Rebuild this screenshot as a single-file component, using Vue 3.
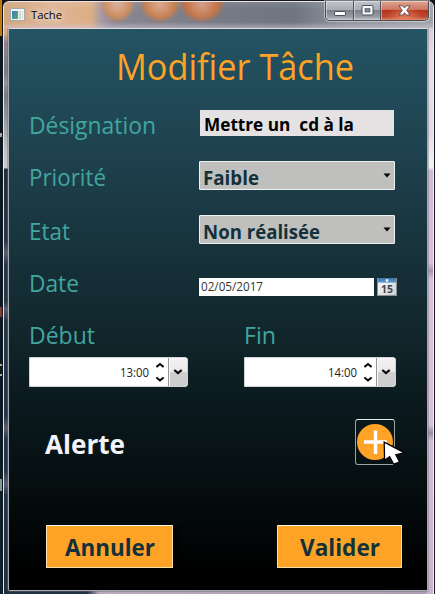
<script setup>
import { h } from 'vue'

// Single line of text fitted to a given advance width, with its baseline at `base`.
const FitText = ({ text, w, height, base }) =>
  h('svg', { width: w, height, class: 'fit' }, [
    h('text', { x: 0, y: base, textLength: w, lengthAdjust: 'spacingAndGlyphs' }, text),
  ])
FitText.props = ['text', 'w', 'height', 'base']

const times = [
  { label: 'Début', lw: 66, value: '13:00', width: 159 },
  { label: 'Fin', lw: 32, value: '14:00', width: 152 },
]
</script>

<template>
  <div class="desktop">
    <div class="behind"><i class="m1"></i><i class="m2"></i><i class="m3"></i><i class="m4"></i><i class="m5"></i></div>
    <div class="window">
      <header class="titlebar">
        <div class="glass"><b></b><b></b><b></b></div>
        <svg class="appicon" width="15" height="13" viewBox="0 0 15 13">
          <defs><linearGradient id="ai" x2="1" y2="1"><stop offset="0" stop-color="#3c78b4" /><stop offset="1" stop-color="#55b078" /></linearGradient></defs>
          <rect x=".5" y=".5" width="14" height="12" fill="#f4f5f3" stroke="#a8aaa9" />
          <rect x="2" y="3" width="6" height="8" fill="url(#ai)" />
          <rect x="9" y="3" width="2" height="8" fill="#ccd8d5" /><rect x="12" y="3" width="1" height="8" fill="#d8dedc" />
        </svg>
        <FitText class="caption" text="Tache" :w="31" :height="20" :base="15" />
        <div class="controls">
          <span><svg width="14" height="8" viewBox="0 0 14 8"><rect x="1.5" y="2.5" width="11" height="4" rx=".6" fill="#fff" stroke="#4b4f5e" /></svg></span>
          <span><svg width="13" height="11" viewBox="0 0 13 11"><rect x="1" y=".5" width="11" height="9.5" rx=".7" fill="#f8f8f8" stroke="#4b4f5e" /><rect x="4.2" y="3.8" width="4.6" height="3" fill="#8b909b" stroke="#4b4f5e" /></svg></span>
          <span class="close"><svg width="13" height="11" viewBox="0 0 13 11"><path d="M1 .8H4.6L6.5 3 8.4.8H12L8.8 5.3 12 10H8.4L6.5 7.7 4.6 10H1L4.2 5.3Z" fill="#fff" stroke="#5b4650" stroke-width=".9" /></svg></span>
        </div>
      </header>

      <main class="client">
        <h1><FitText text="Modifier Tâche" :w="238" :height="51" :base="51" /></h1>

        <div class="row r1">
          <FitText class="label" text="Désignation" :w="127" :height="30" :base="26" />
          <div class="field"><FitText text="Mettre un  cd à la" :w="150" :height="26" :base="21" /></div>
        </div>
        <div class="row r2">
          <FitText class="label" text="Priorité" :w="77" :height="30" :base="26" />
          <div class="combo"><FitText text="Faible" :w="56" :height="27" :base="23" />
            <svg width="8" height="5" viewBox="0 0 8 5"><path d="M.5 .5H7.5L4 4.5Z" fill="#000" /></svg></div>
        </div>
        <div class="row r3">
          <FitText class="label" text="Etat" :w="41" :height="30" :base="26" />
          <div class="combo"><FitText text="Non réalisée" :w="117" :height="27" :base="23" />
            <svg width="8" height="5" viewBox="0 0 8 5"><path d="M.5 .5H7.5L4 4.5Z" fill="#000" /></svg></div>
        </div>
        <div class="row r4">
          <FitText class="label" text="Date" :w="50" :height="30" :base="26" />
          <div class="date"><FitText text="02/05/2017" :w="62" :height="18" :base="13" /></div>
          <svg class="cal" width="20" height="18" viewBox="0 0 20 18">
            <defs>
              <linearGradient id="ct" x2="0" y2="1"><stop offset="0" stop-color="#3f75ae" /><stop offset="1" stop-color="#5b9bd4" /></linearGradient>
              <linearGradient id="cb" x2="1" y2="1"><stop offset="0" stop-color="#fff" /><stop offset="1" stop-color="#c9cdd1" /></linearGradient>
            </defs>
            <rect x=".5" y=".5" width="19" height="17" fill="url(#cb)" stroke="#8b9095" />
            <rect x="1" y="0" width="18" height="4.6" fill="url(#ct)" /><circle cx="10" cy="2.5" r="1.4" fill="#e8f1f8" />
            <text x="4" y="15" textLength="12" lengthAdjust="spacingAndGlyphs">15</text>
          </svg>
        </div>

        <div class="times">
          <div v-for="t in times" :key="t.label">
            <FitText class="label" :text="t.label" :w="t.lw" :height="30" :base="26" />
            <div class="time" :style="{ width: t.width + 'px' }">
              <FitText class="tv" :text="t.value" :w="29" :height="28" :base="19" />
              <svg class="spin" width="10" height="20" viewBox="0 0 10 20" fill="none" stroke="#000" stroke-width="2"><path d="M1.4 5 5 2 8.6 5M1.4 15.5 5 18.5 8.6 15.5" /></svg>
              <span class="drop"><svg width="10" height="6" viewBox="0 0 10 6"><path d="M1.3 1 5 4 8.7 1" fill="none" stroke="#000" stroke-width="2.2" /></svg></span>
            </div>
          </div>
        </div>

        <div class="alert">
          <FitText class="alabel" text="Alerte" :w="80" :height="46" :base="35" />
          <button class="add">
            <svg width="36" height="36" viewBox="0 0 36 36"><circle cx="18" cy="18" r="18" fill="#ffa326" /><path d="M18.5 6.5V30M7 18H30" stroke="#fff" stroke-width="3.4" /></svg>
            <svg class="cursor" width="25" height="26" viewBox="0 0 25 26"><path d="M1.2 1.2 1.6 19.2 6.6 15.6 10.8 23.2 16.6 21 12.8 13.6 21.6 11.8Z" fill="#fff" stroke="#000" stroke-width="1.3" /></svg>
          </button>
        </div>

        <div class="actions">
          <button class="b1"><FitText text="Annuler" :w="90" :height="41" :base="30" /></button>
          <button class="b2"><FitText text="Valider" :w="80" :height="41" :base="30" /></button>
        </div>
      </main>
    </div>
  </div>
</template>

<style>
body { margin: 0; overflow: hidden; }
</style>
<style scoped>
* { box-sizing: border-box; }
.desktop { width: 435px; height: 594px; display: flex; background: #171019; font-family: "Open Sans", "Noto Sans", sans-serif; overflow: hidden; }
.fit { display: block; overflow: visible; flex: none; white-space: pre; }
.fit :deep(text) { white-space: pre; }
.field :deep(text) { white-space: pre; }
.behind { position: relative; width: 2px; background: linear-gradient(#c07a13 0 36px, #071a23 36px 400px, #092630 594px); }
.behind i { position: absolute; left: 0; width: 2px; height: 2px; background: #aaa69d; }
.behind .m1 { top: 133px; height: 4px; } .behind .m2 { top: 307px; height: 10px; background: #843b38; }
.behind .m3 { top: 364px; } .behind .m4 { top: 374px; } .behind .m5 { top: 479px; height: 12px; background: #7e9b94; }
.window {
  width: 433px; height: 594px; padding: 0 6px 3px 5px; display: flex; flex-direction: column;
  border: 1px solid #15161b; border-bottom: 0; border-radius: 7px 7px 0 0; box-shadow: inset 1px 1px 0 #e9e6e9, inset -1px 0 0 #f5eff5;
  background:
    linear-gradient(#d8ac84 0 32px, #8c8490 42px, #747d88 70px, #9194a0 82px, #737c86 94px, #bcc2c9 150px, #c9cdd2 167px, #1d2e3d 168px, #24384a 240px, #5b5f73 252px, #21364a 264px, #21364a 300px, #5b5f73 308px, #21364a 320px, #21364a 415px, #5b5f73 427px, #21364a 438px, #21364a 470px, #5b5f73 483px, #21364a 494px, #203040 594px) 0 0 / 6px 100% no-repeat,
    linear-gradient(#9da1a9 0, #d6cbdb 28px, #e8deeb 60px, #e2d8e6 130px, #f5f2f6 166px, #cdbbd2 170px, #d7c1dc 262px, #a895b0 270px, #d7c1dc 278px, #d7c1dc 424px, #9d8ba4 432px, #d3bcd7 440px, #c7b4cc 594px) 100% 0 / 7px 100% no-repeat,
    linear-gradient(90deg, #213344 0 84px, #b9a7bb 96px, #b19eb6 100%) 0 100% / 100% 6px no-repeat, #8b8f99;
}
.titlebar { height: 27px; flex: none; display: flex; position: relative; padding-left: 2px; }
.glass {
  position: absolute; left: -4px; right: -5px; top: 1px; bottom: 0; overflow: hidden; border-radius: 5px 5px 0 0;
  background: linear-gradient(#ffffff18, transparent 8px, transparent 20px, #d3c8d888), linear-gradient(90deg, #d3a67c 0, #deb493 50px, #dcae85 87px, #a69ca5 97px, #8a8793 111px, #747985 226px, #6e7581 290px, #8d929a 340px, #a0a4aa);
}
.glass b { position: absolute; top: -16px; left: 98px; width: 31px; height: 34px; border-radius: 50%; background: radial-gradient(circle, #dbb8a8, #cd8a58 65%, #c07a42); filter: blur(2px); }
.glass b:nth-child(2) { left: 138px; width: 36px; background: radial-gradient(circle, #dbb09c, #c87c48 65%, #bd7038); }
.glass b:nth-child(3) { left: 178px; width: 40px; background: radial-gradient(circle, #d3a596, #c47040 65%, #b9652f); }
.appicon { position: relative; margin-top: 7px; }
.caption { position: relative; margin: 3px 0 0 6px; font-size: 11.5px; fill: #000; text-shadow: 0 0 7px #fff, 0 0 9px #fff; }
.controls { position: relative; margin: 0 -1px 0 auto; width: 104px; height: 20px; display: flex; border: 1px solid #474b56; border-top: 0; border-radius: 0 0 5px 5px; overflow: hidden; box-shadow: 0 0 0 1px #ffffff70; }
.controls span { width: 28px; display: flex; align-items: center; justify-content: center; background: linear-gradient(#c0c3c8, #a9adb4 47%, #7d828c 50%, #9a9ea6 85%, #cfd1d5); box-shadow: inset 1px 1px #ffffff70; border-right: 1px solid #4e525d; }
.controls span:nth-child(1) { padding-top: 5px; }
.controls span:nth-child(2) { width: 27px; }
.controls .close { width: 47px; border: 0; background: radial-gradient(ellipse at 50% 100%, #e5825c, transparent 55%), linear-gradient(#dfa593, #cb7460 46%, #b8321c 50%, #bd4a2f 85%, #db8f74); }
.client { flex: 1; min-height: 0; border: 1px solid #a9a8ad; border-top-color: #e3d8df; box-shadow: 0 0 0 1px #6b687066; border-radius: 2px; background: linear-gradient(#245463, #1f4350 20%, #18333c 39%, #12282e 52%, #0b1a1f 66%, #061012 79%, #000 97%); }
h1 { margin: 0 0 0 107px; height: 79px; font-size: 36px; font-weight: 400; fill: #ffa326; }
.label { font-size: 23px; fill: #40a69f; }
.row { display: flex; padding-left: 20px; height: 52px; }
.row .label { margin-right: auto; }
.r2 { height: 54px; }
.field { width: 194px; height: 26px; margin: 2px 33px 0 0; padding-left: 4px; background: #e4e2e3; font: 700 18px "Open Sans", sans-serif; }
.combo { width: 196px; height: 29px; margin: 1px 32px 0 0; padding: 0 3px 0 2.5px; display: flex; align-items: center; justify-content: space-between; background: #bfbfbd; border: 1px solid #eef1ef; border-radius: 1px; font-weight: 700; font-size: 19.5px; fill: #12313a; }
.date { width: 175px; height: 18px; margin: 12px 3px 0 0; padding-left: 1.5px; background: #fff; font-size: 12px; fill: #333; }
.cal { margin: 12px 30px 0 0; font: 700 10.5px "Open Sans", sans-serif; fill: #42474d; }
.times { display: flex; justify-content: space-between; padding: 0 31px 0 20px; height: 101px; }
.time { height: 30px; margin: 9px 0 0 0; display: flex; align-items: center; background: #fff; border: 1px solid #cdd3d7; border-radius: 0 3px 3px 0; }
.tv { margin-left: auto; font-size: 12px; fill: #222; }
.spin { margin: 0 3px 0 6px; }
.drop { width: 19px; height: 28px; display: flex; align-items: center; justify-content: center; border-left: 1px solid #8f969b; background: linear-gradient(#f3f3f3, #e8e8e8 49%, #cfcfcf 51%, #cdcdcd); border-radius: 0 2px 2px 0; box-shadow: inset 1px 1px #fafafa; }
.alert { display: flex; justify-content: space-between; padding: 0 32px 0 36px; height: 106px; }
.alabel { font-size: 27px; font-weight: 700; fill: #f2f3fb; }
button { display: block; margin: 0; padding: 0; font-family: inherit; }
.add { position: relative; width: 40px; height: 46px; background: transparent; border: 1px solid #9da3a5; border-top-color: #e8eaea; border-radius: 3px; display: flex; align-items: center; justify-content: center; }
.cursor { position: absolute; left: 27px; top: 21px; }
.actions { display: flex; justify-content: space-between; padding: 0 25px 0 37px; }
.actions button { width: 127px; height: 43px; border: 1px solid #ffe0ab; border-top-color: #fff8ec; border-radius: 1px; background: #ffa326; font-size: 23px; font-weight: 700; fill: #12313a; padding-left: 18px; box-shadow: 3px 3px 5px #000; }
.actions .b2 { width: 125px; padding-left: 22px; }
</style>
